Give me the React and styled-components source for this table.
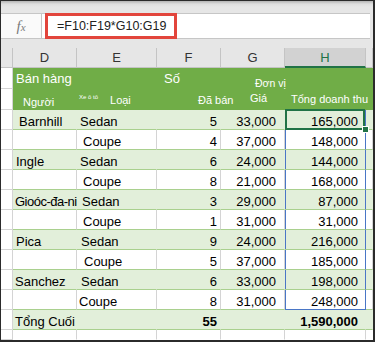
import React from "react";
import styled, { createGlobalStyle } from "styled-components";

const GlobalStyle = createGlobalStyle`
  html, body { margin: 0; padding: 0; background: #fff; }
  body { font-family: "Liberation Sans", Arial, sans-serif; }
`;

// row head, D, E, F, G, H, I (cut)
const COLS = "12px 64px 80px 64px 64px 81px 7px";

const Frame = styled.div`
  width: 375px;
  height: 342px;
  box-sizing: border-box;
  border: 1px solid #2b2b2b;
  border-right-width: 2px;
  border-bottom-width: 2px;
  background: #e6e6e6;
  overflow: hidden;
  display: flex;
  flex-direction: column;
  font-family: "Liberation Sans", Arial, sans-serif;
  color: #000;
`;

const TopBand = styled.div`
  flex: none;
  height: 12px;
  background: linear-gradient(#b4b4b4, #dedede 3px, #e6e6e6 6px);
`;

const FormulaBar = styled.div`
  flex: none;
  height: 26px;
  display: flex;
`;

const FxBox = styled.div`
  width: 41px;
  box-sizing: border-box;
  background: #fafafa;
  border-top: 1px solid #c6c6c6;
  border-bottom: 1px solid #c6c6c6;
  border-right: 1px solid #c6c6c6;
  display: flex;
  align-items: center;
  justify-content: center;
  font-family: "Liberation Serif", "Times New Roman", serif;
  font-style: italic;
  color: #7a7a7a;
`;

const FxLetter = styled.span`
  font-size: ${(p) => p.$size}px;
  position: relative;
  top: ${(p) => p.$drop}px;
`;

const InputArea = styled.div`
  flex: 1;
  display: flex;
  box-sizing: border-box;
  background: #fff;
  border-top: 1px solid #c6c6c6;
  border-bottom: 1px solid #c6c6c6;
  margin-right: 3px;
  padding-left: 3px;
`;

const RedBox = styled.div`
  width: 132px;
  box-sizing: border-box;
  margin: -1px 0;
  border: 3px solid #e2453c;
  display: flex;
  align-items: center;
  padding-left: 9px;
  font-size: 12.5px;
  color: #222;
  white-space: nowrap;
`;

const Gap = styled.div`
  flex: none;
  height: 9px;
`;

const ColHeadRow = styled.div`
  flex: none;
  display: grid;
  grid-template-columns: ${COLS};
  height: 20px;
`;

const ColHead = styled.div`
  box-sizing: border-box;
  display: flex;
  align-items: center;
  justify-content: center;
  font-size: 13px;
  background: ${(p) => (p.$active ? "#d2d2d2" : "#e6e6e6")};
  color: ${(p) => (p.$active ? "#217346" : "#333")};
  border-right: 1px solid #c4c4c4;
  border-bottom: ${(p) => (p.$active ? "2px solid #217346" : "1px solid #c4c4c4")};
`;

const Row = styled.div`
  flex: none;
  display: grid;
  grid-template-columns: ${COLS};
  height: ${(p) => p.$h}px;
  background: ${(p) =>
    p.$tone === "head" ? "#70ad47" : p.$tone === "stripe" ? "#e2efda" : "#fff"};
  color: ${(p) => (p.$tone === "head" ? "#fff" : "#000")};
`;

const RowHead = styled.div`
  box-sizing: border-box;
  background: #fff;
  border-right: 1px solid #d4d4d4;
  border-bottom: 1px solid #d4d4d4;
`;

const Cell = styled.div`
  position: relative;
  box-sizing: border-box;
  display: flex;
  align-items: flex-end;
  justify-content: ${(p) => (p.$right ? "flex-end" : "flex-start")};
  gap: ${(p) => p.$gap || 0}px;
  padding: 0 ${(p) => p.$pr || 0}px ${(p) => p.$pb ?? 1}px ${(p) => p.$pl || 0}px;
  font-size: ${(p) => p.$size || 13}px;
  line-height: ${(p) => p.$size || 13}px;
  font-weight: ${(p) => (p.$bold ? 700 : 400)};
  letter-spacing: ${(p) => p.$tight || 0}px;
  white-space: nowrap;
  border-right: 1px solid ${(p) => (p.$lines ? "#d4d4d4" : "transparent")};
  border-bottom: 1px solid ${(p) => (p.$last ? "#4a76c6" : p.$rule ? "#a9d08e" : "transparent")};
  ${(p) => p.$sel && "border-right-color: #4a76c6; box-shadow: inset 1px 0 #4a76c6;"}
  ${(p) =>
    p.$active &&
    `&::after {
      content: "";
      position: absolute;
      left: 0;
      right: 0;
      top: -1px;
      bottom: -1px;
      border: 2px solid #217346;
      pointer-events: none;
    }`}
`;

const Small = styled.span`
  font-size: ${(p) => p.$size}px;
  line-height: ${(p) => p.$size}px;
  margin-bottom: ${(p) => p.$lift || 0}px;
`;

const FillHandle = styled.div`
  position: absolute;
  right: -4px;
  bottom: -4px;
  width: 5px;
  height: 5px;
  background: #217346;
  border: 1px solid #fff;
  z-index: 3;
`;

const rows = [
  { name: "Barnhill", namePad: 6, type: "Sedan", typePad: 3, sold: 5, price: "33,000", total: "165,000" },
  { type: "Coupe", typePad: 6, sold: 4, price: "37,000", total: "148,000" },
  { name: "Ingle", namePad: 3, type: "Sedan", typePad: 3, sold: 6, price: "24,000", total: "144,000" },
  { type: "Coupe", typePad: 6, sold: 8, price: "21,000", total: "168,000" },
  { name: "Gioóc-đa-ni", namePad: 2, tight: -0.5, type: "Sedan", typePad: 5, sold: 3, price: "29,000", total: "87,000" },
  { type: "Coupe", typePad: 6, sold: 1, price: "31,000", total: "31,000" },
  { name: "Pica", namePad: 3, type: "Sedan", typePad: 4, sold: 9, price: "24,000", total: "216,000" },
  { type: "Coupe", typePad: 7, sold: 5, price: "37,000", total: "185,000" },
  { name: "Sanchez", namePad: 2, type: "Sedan", typePad: 4, sold: 6, price: "33,000", total: "198,000" },
  { type: "Coupe", typePad: 2, sold: 8, price: "31,000", total: "248,000" },
];

export default function App() {
  return (
    <>
      <GlobalStyle />
      <Frame>
        <TopBand />
        <FormulaBar>
          <FxBox>
            <FxLetter $size={15}>f</FxLetter>
            <FxLetter $size={11} $drop={1}>x</FxLetter>
          </FxBox>
          <InputArea>
            <RedBox>=F10:F19*G10:G19</RedBox>
          </InputArea>
        </FormulaBar>
        <Gap />
        <ColHeadRow>
          <ColHead />
          <ColHead>D</ColHead>
          <ColHead>E</ColHead>
          <ColHead>F</ColHead>
          <ColHead>G</ColHead>
          <ColHead $active>H</ColHead>
          <ColHead />
        </ColHeadRow>

        <Row $tone="head" $h={21}>
          <RowHead />
          <Cell $pl={3} $pb={3}>Bán hàng</Cell>
          <Cell />
          <Cell $pl={7} $pb={3}>Số</Cell>
          <Cell $pl={34} $pb={0} $size={10.5}>Đơn vị</Cell>
          <Cell />
          <Cell />
        </Row>
        <Row $tone="head" $h={21}>
          <RowHead />
          <Cell $pl={10} $pb={1} $size={11}>Người</Cell>
          <Cell $pl={2} $pb={3} $gap={12} $size={11}>
            <Small $size={6} $lift={6}>Xe ô tô</Small>
            <span>Loại</span>
          </Cell>
          <Cell $pl={41} $pb={3} $size={11}>Đã bán</Cell>
          <Cell $pl={29} $pb={5} $size={11}>Giá</Cell>
          <Cell $pl={6} $pb={4} $size={11}>Tổng doanh thu</Cell>
          <Cell />
        </Row>

        {rows.map((r, i) => {
          const stripe = i % 2 === 0;
          const lines = !stripe;
          return (
            <Row key={i} $tone={stripe ? "stripe" : "plain"} $h={20}>
              <RowHead />
              <Cell $rule $lines={lines} $pl={r.namePad} $tight={r.tight}>
                {r.name}
              </Cell>
              <Cell $rule $lines={lines} $pl={r.typePad}>{r.type}</Cell>
              <Cell $rule $lines={lines} $right $pr={3}>{r.sold}</Cell>
              <Cell $rule $lines={lines} $right $pr={8}>{r.price}</Cell>
              <Cell
                $rule
                $lines
                $sel
                $active={i === 0}
                $last={i === rows.length - 1}
                $right
                $pr={7}
              >
                {r.total}
                {i === 0 && <FillHandle />}
              </Cell>
              <Cell $rule $lines={lines} />
            </Row>
          );
        })}

        <Row $tone="stripe" $h={20}>
          <RowHead />
          <Cell $rule $pl={2}>Tổng Cuối</Cell>
          <Cell $rule />
          <Cell $rule $right $pr={3} $bold>55</Cell>
          <Cell $rule />
          <Cell $rule $right $pr={7} $bold>1,590,000</Cell>
          <Cell $rule />
        </Row>
        <Row $tone="plain" $h={10}>
          <RowHead />
          <Cell $lines />
          <Cell $lines />
          <Cell $lines />
          <Cell $lines />
          <Cell $lines />
          <Cell />
        </Row>
      </Frame>
    </>
  );
}
